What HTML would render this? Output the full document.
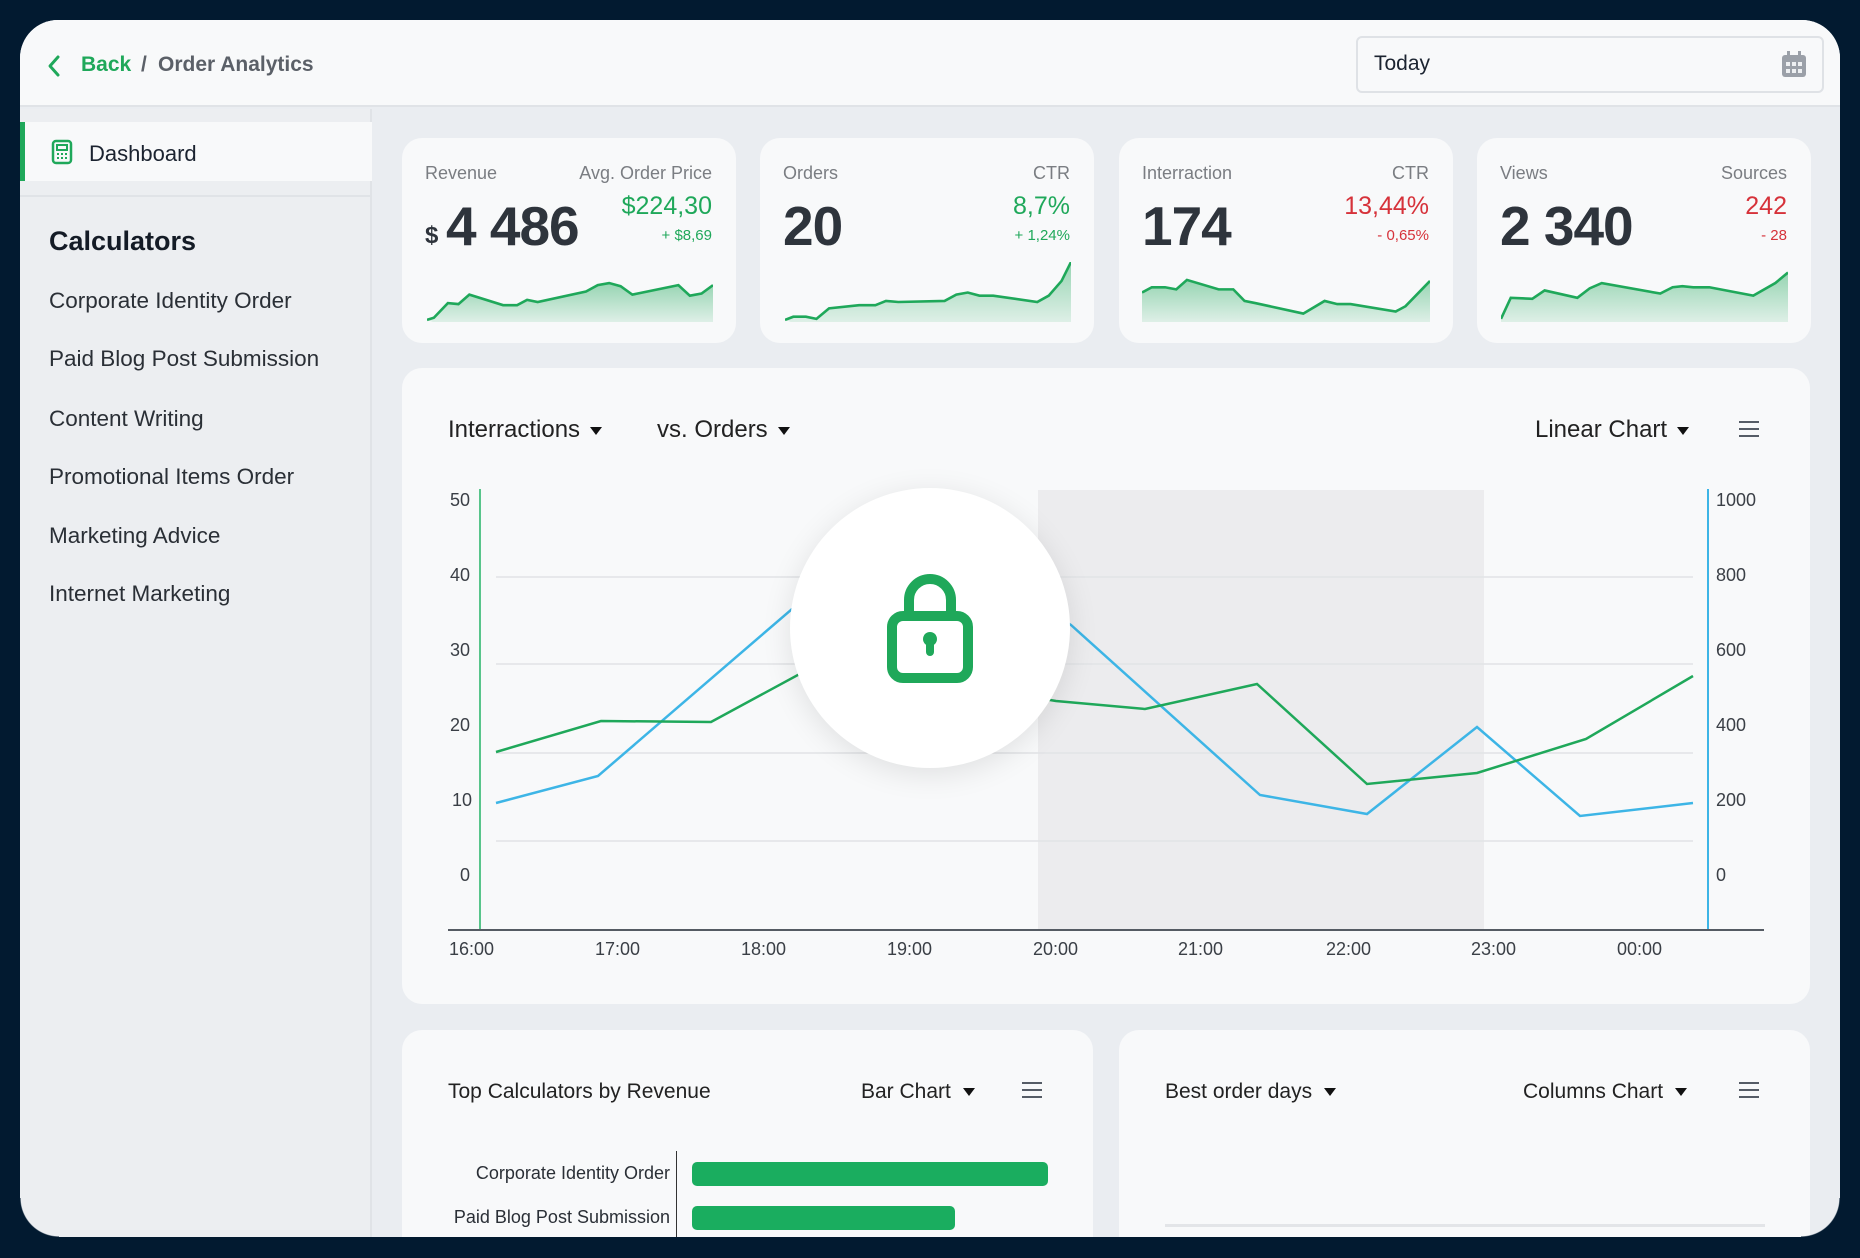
<!DOCTYPE html>
<html><head><meta charset="utf-8"><style>
*{margin:0;padding:0;box-sizing:border-box}
body{width:1860px;height:1258px;background:#021a30;font-family:"Liberation Sans",sans-serif;position:relative;overflow:hidden}
.a{position:absolute}
#panel{left:20px;top:20px;width:1820px;height:1217px;border-radius:38px;background:#eaedf1;overflow:hidden}
.card{position:absolute;background:#f8f9fa;border-radius:20px}
.lbl{position:absolute;font-size:18px;color:#7a7d82;top:25px}
.big{position:absolute;font-size:55px;font-weight:bold;color:#2e343c;top:56px;letter-spacing:-1px}
.v{position:absolute;right:24px;top:54px;font-size:25px}
.d{position:absolute;right:24px;top:89px;font-size:15px}
.g{color:#1fa85a}.r{color:#d6323a}
.side{position:absolute;left:49px;font-size:22.5px;color:#2a2f36}
.tick{position:absolute;font-size:18px;color:#3a3f46}
.hb{position:absolute;width:20px;height:16px;border-top:2px solid #555c66;border-bottom:2px solid #555c66}
.hb:after{content:"";position:absolute;left:0;right:0;top:5px;border-top:2px solid #555c66}
.dd{font-size:24px;color:#222}
.tri{display:inline-block;width:0;height:0;border-left:6px solid transparent;border-right:6px solid transparent;border-top:8px solid #111;vertical-align:middle;margin-left:10px}
</style></head><body>
<div id="panel" class="a">
 <div class="a" style="left:0;top:0;width:1820px;height:87px;background:#f8f9fa;border-bottom:2px solid #e0e3e7"></div>
 <svg class="a" style="left:26px;top:34px" width="16" height="24" viewBox="0 0 16 24"><path d="M12 3 L4 12 L12 21" fill="none" stroke="#1fa85a" stroke-width="3" stroke-linecap="round" stroke-linejoin="round"/></svg>
 <div class="a" style="left:61px;top:33px;font-size:21px;font-weight:bold;color:#1fa85a">Back</div>
 <div class="a" style="left:121px;top:33px;font-size:21px;font-weight:bold;color:#5b6068">/</div>
 <div class="a" style="left:138px;top:33px;font-size:21px;font-weight:bold;color:#5b6068">Order Analytics</div>
 <div class="a" style="left:1336px;top:16px;width:468px;height:57px;border:2px solid #dfe2e6;border-radius:6px;background:#f8f9fa"></div>
 <div class="a" style="left:1354px;top:32px;font-size:21px;color:#1b2330">Today</div>
 <svg class="a" style="left:1761px;top:30px" width="26" height="28" viewBox="0 0 26 28"><rect x="1" y="5" width="24" height="22" rx="3" fill="#9ba0a8"/><rect x="6" y="1" width="3" height="6" fill="#9ba0a8"/><rect x="17" y="1" width="3" height="6" fill="#9ba0a8"/><g fill="#eef0f2"><rect x="5" y="12" width="4" height="4"/><rect x="11" y="12" width="4" height="4"/><rect x="17" y="12" width="4" height="4"/><rect x="5" y="19" width="4" height="4"/><rect x="11" y="19" width="4" height="4"/><rect x="17" y="19" width="4" height="4"/></g></svg>

 <div class="a" style="left:0;top:89px;width:352px;height:1130px;background:#eceef1;border-right:2px solid #e0e3e7"></div>
 <div class="a" style="left:0;top:102px;width:352px;height:59px;background:#f8f9fa;border-left:5px solid #1fa85a"></div>
 <svg class="a" style="left:31px;top:119px" width="22" height="26" viewBox="0 0 22 26"><rect x="2" y="2" width="18" height="22" rx="3" fill="none" stroke="#1fa85a" stroke-width="2.5"/><rect x="6" y="6" width="10" height="5" fill="none" stroke="#1fa85a" stroke-width="2"/><g fill="#1fa85a"><rect x="6" y="14" width="2" height="2"/><rect x="10" y="14" width="2" height="2"/><rect x="14" y="14" width="2" height="2"/><rect x="6" y="18" width="2" height="2"/><rect x="10" y="18" width="2" height="2"/><rect x="14" y="18" width="2" height="2"/></g></svg>
 <div class="a" style="left:69px;top:121px;font-size:22px;color:#1b2330">Dashboard</div>
 <div class="a" style="left:0;top:175px;width:352px;border-top:2px solid #e0e3e7"></div>
 <div class="a" style="left:29px;top:206px;font-size:27px;font-weight:bold;color:#141b26">Calculators</div>
 <div class="side" style="left:29px;top:268px">Corporate Identity Order</div>
 <div class="side" style="left:29px;top:326px">Paid Blog Post Submission</div>
 <div class="side" style="left:29px;top:386px">Content Writing</div>
 <div class="side" style="left:29px;top:444px">Promotional Items Order</div>
 <div class="side" style="left:29px;top:503px">Marketing Advice</div>
 <div class="side" style="left:29px;top:561px">Internet Marketing</div>
</div>

<div class="card" style="left:402px;top:138px;width:334px;height:205px">
 <div class="lbl" style="left:23px">Revenue</div><div class="lbl" style="right:24px">Avg. Order Price</div>
 <div class="a" style="left:23px;top:84px;font-size:24px;font-weight:bold;color:#2e343c">$</div>
 <div class="big" style="left:44px">4 486</div>
 <div class="v g">$224,30</div><div class="d g">+ $8,69</div>
 <svg class="a" style="left:25px;top:124px" width="286" height="60" viewBox="0 0 100 57" preserveAspectRatio="none"><defs><linearGradient id="gr" x1="0" y1="0" x2="0" y2="1"><stop offset="0" stop-color="#1fa85a" stop-opacity=".45"/><stop offset="1" stop-color="#1fa85a" stop-opacity=".12"/></linearGradient></defs>
 <polygon fill="url(#gr)" points="0,55 2.4,53 7.3,39 11,40 14.8,31 26.6,41 31.5,41 35,36 38.7,38 55.6,28 59.7,22 63.7,20 67.7,23 71.8,31 87.9,22 91.9,32 96,30 100,22 100,57 2,57"/>
 <polyline fill="none" stroke="#1fa85a" stroke-width="2.6" vector-effect="non-scaling-stroke" points="0,55 2.4,53 7.3,39 11,40 14.8,31 26.6,41 31.5,41 35,36 38.7,38 55.6,28 59.7,22 63.7,20 67.7,23 71.8,31 87.9,22 91.9,32 96,30 100,22"/></svg>
</div>
<div class="card" style="left:760px;top:138px;width:334px;height:205px">
 <div class="lbl" style="left:23px">Orders</div><div class="lbl" style="right:24px">CTR</div>
 <div class="big" style="left:23px">20</div>
 <div class="v g">8,7%</div><div class="d g">+ 1,24%</div>
 <svg class="a" style="left:25px;top:124px" width="286" height="60" viewBox="0 0 100 57" preserveAspectRatio="none">
 <polygon fill="url(#gr)" points="0,55 2.9,52 7.3,52 11,54 15.4,44 25.9,41 31.6,41 35.3,37 39.6,38 55.8,37 59.9,31 63.9,29 68,32 72.8,32 88.2,38 92.2,32 96.7,18 100,0 100,57 2,57"/>
 <polyline fill="none" stroke="#1fa85a" stroke-width="2.6" vector-effect="non-scaling-stroke" points="0,55 2.9,52 7.3,52 11,54 15.4,44 25.9,41 31.6,41 35.3,37 39.6,38 55.8,37 59.9,31 63.9,29 68,32 72.8,32 88.2,38 92.2,32 96.7,18 100,0"/></svg>
</div>
<div class="card" style="left:1119px;top:138px;width:334px;height:205px">
 <div class="lbl" style="left:23px">Interraction</div><div class="lbl" style="right:24px">CTR</div>
 <div class="big" style="left:23px">174</div>
 <div class="v r">13,44%</div><div class="d r">- 0,65%</div>
 <svg class="a" style="left:23px;top:124px" width="288" height="60" viewBox="0 0 100 57" preserveAspectRatio="none">
 <polygon fill="url(#gr)" points="0,29 3.4,24 8,24 11.9,26 15.6,17 26.6,26 31.7,26 35.6,37 39.3,39 56,49 63.4,37 67.8,40 72.4,40 88.1,47 91.5,42 100,18 100,57 0,57"/>
 <polyline fill="none" stroke="#1fa85a" stroke-width="2.6" vector-effect="non-scaling-stroke" points="0,29 3.4,24 8,24 11.9,26 15.6,17 26.6,26 31.7,26 35.6,37 39.3,39 56,49 63.4,37 67.8,40 72.4,40 88.1,47 91.5,42 100,18"/></svg>
</div>
<div class="card" style="left:1477px;top:138px;width:334px;height:205px">
 <div class="lbl" style="left:23px">Views</div><div class="lbl" style="right:24px">Sources</div>
 <div class="big" style="left:23px">2 340</div>
 <div class="v r">242</div><div class="d r">- 28</div>
 <svg class="a" style="left:24px;top:124px" width="287" height="60" viewBox="0 0 100 57" preserveAspectRatio="none">
 <polygon fill="url(#gr)" points="0,54 3.4,34 10.9,35 15.2,27 26.6,34 30.9,25 35.1,20 55.5,30 59.8,24 63.2,23 67,24 72.6,24 87.9,32 95.6,20 100,10 100,57 0,57"/>
 <polyline fill="none" stroke="#1fa85a" stroke-width="2.6" vector-effect="non-scaling-stroke" points="0,54 3.4,34 10.9,35 15.2,27 26.6,34 30.9,25 35.1,20 55.5,30 59.8,24 63.2,23 67,24 72.6,24 87.9,32 95.6,20 100,10"/></svg>
</div>

<div class="card" style="left:402px;top:368px;width:1408px;height:636px"></div>
<div class="a dd" style="left:448px;top:416px">Interractions<span class="tri"></span></div>
<div class="a dd" style="left:657px;top:416px">vs. Orders<span class="tri"></span></div>
<div class="a dd" style="left:1535px;top:416px">Linear Chart<span class="tri"></span></div>
<div class="hb" style="left:1739px;top:421px"></div>

<svg class="a" style="left:0;top:0" width="1860" height="1258">
 <rect x="1038" y="490" width="446" height="440" fill="#ececee"/>
 <g stroke="#e1e3e6" stroke-width="1.5">
  <line x1="496" y1="577" x2="1693" y2="577"/><line x1="496" y1="664" x2="1693" y2="664"/>
  <line x1="496" y1="753" x2="1693" y2="753"/><line x1="496" y1="841" x2="1693" y2="841"/>
 </g>
 <line x1="480" y1="489" x2="480" y2="930" stroke="#58c58b" stroke-width="2"/>
 <line x1="1708" y1="489" x2="1708" y2="930" stroke="#3db5e6" stroke-width="2"/>
 <line x1="448" y1="930" x2="1764" y2="930" stroke="#555b63" stroke-width="2"/>
 <polyline fill="none" stroke="#3db5e6" stroke-width="2.5" points="496,803 598,776 792,609 930,540 1071,625 1260,795 1367,814 1477,727 1580,816 1693,803"/>
 <polyline fill="none" stroke="#1fa85a" stroke-width="2.5" points="496,752 601,721 711,722 807,670 930,680 1056,701 1145,709 1257,684 1367,784 1477,773 1586,739 1693,676"/>
</svg>
<div class="tick" style="left:450px;top:490px">50</div>
<div class="tick" style="left:450px;top:565px">40</div>
<div class="tick" style="left:450px;top:640px">30</div>
<div class="tick" style="left:450px;top:715px">20</div>
<div class="tick" style="left:452px;top:790px">10</div>
<div class="tick" style="left:460px;top:865px">0</div>
<div class="tick" style="left:1716px;top:490px">1000</div>
<div class="tick" style="left:1716px;top:565px">800</div>
<div class="tick" style="left:1716px;top:640px">600</div>
<div class="tick" style="left:1716px;top:715px">400</div>
<div class="tick" style="left:1716px;top:790px">200</div>
<div class="tick" style="left:1716px;top:865px">0</div>
<div class="tick" style="left:449px;top:939px">16:00</div>
<div class="tick" style="left:595px;top:939px">17:00</div>
<div class="tick" style="left:741px;top:939px">18:00</div>
<div class="tick" style="left:887px;top:939px">19:00</div>
<div class="tick" style="left:1033px;top:939px">20:00</div>
<div class="tick" style="left:1178px;top:939px">21:00</div>
<div class="tick" style="left:1326px;top:939px">22:00</div>
<div class="tick" style="left:1471px;top:939px">23:00</div>
<div class="tick" style="left:1617px;top:939px">00:00</div>

<div class="a" style="left:790px;top:488px;width:280px;height:280px;border-radius:50%;background:#fff;box-shadow:0 6px 30px rgba(0,0,0,.10)"></div>
<svg class="a" style="left:880px;top:570px" width="100" height="118" viewBox="0 0 100 118">
 <path d="M29 42 V30 A21 21 0 0 1 71 30 V42" fill="none" stroke="#1fa85a" stroke-width="10"/>
 <rect x="12" y="46" width="76" height="62" rx="11" fill="none" stroke="#1fa85a" stroke-width="10"/>
 <circle cx="50" cy="69" r="7" fill="#1fa85a"/><rect x="46" y="70" width="8" height="16" rx="4" fill="#1fa85a"/>
</svg>

<div class="card" style="left:402px;top:1030px;width:691px;height:207px;border-bottom-left-radius:0;border-bottom-right-radius:0"></div>
<div class="card" style="left:1119px;top:1030px;width:691px;height:207px;border-bottom-left-radius:0;border-bottom-right-radius:0"></div>
<div class="a" style="left:448px;top:1080px;font-size:21px;color:#222">Top Calculators by Revenue</div>
<div class="a" style="left:861px;top:1080px;font-size:21px;color:#222">Bar Chart<span class="tri" style="margin-left:12px"></span></div>
<div class="hb" style="left:1022px;top:1082px"></div>
<div class="a" style="left:1165px;top:1080px;font-size:21px;color:#222">Best order days<span class="tri" style="margin-left:12px"></span></div>
<div class="a" style="left:1523px;top:1080px;font-size:21px;color:#222">Columns Chart<span class="tri" style="margin-left:12px"></span></div>
<div class="hb" style="left:1739px;top:1082px"></div>
<div class="a" style="left:676px;top:1151px;height:86px;border-left:1.5px solid #333"></div>
<div class="a" style="right:1190px;top:1163px;font-size:18px;color:#2a2f36">Corporate Identity Order</div>
<div class="a" style="right:1190px;top:1207px;font-size:18px;color:#2a2f36">Paid Blog Post Submission</div>
<div class="a" style="left:692px;top:1162px;width:356px;height:24px;border-radius:5px;background:#1aad5f"></div>
<div class="a" style="left:692px;top:1206px;width:263px;height:24px;border-radius:5px;background:#1aad5f"></div>
<div class="a" style="left:1165px;top:1224px;width:600px;border-top:3px solid #e3e5e8"></div>
<div class="a" style="left:0;top:1237px;width:1860px;height:21px;background:#021a30"></div>
<div class="a" style="left:1840px;top:0;width:20px;height:1258px;background:#021a30"></div>
<div class="a" style="left:1801px;top:1198px;width:40px;height:40px;background:radial-gradient(circle at 0 0,transparent 38px,#021a30 39px)"></div>
<div class="a" style="left:19px;top:1198px;width:40px;height:40px;background:radial-gradient(circle at 40px 0,transparent 38px,#021a30 39px)"></div>
</body></html>
